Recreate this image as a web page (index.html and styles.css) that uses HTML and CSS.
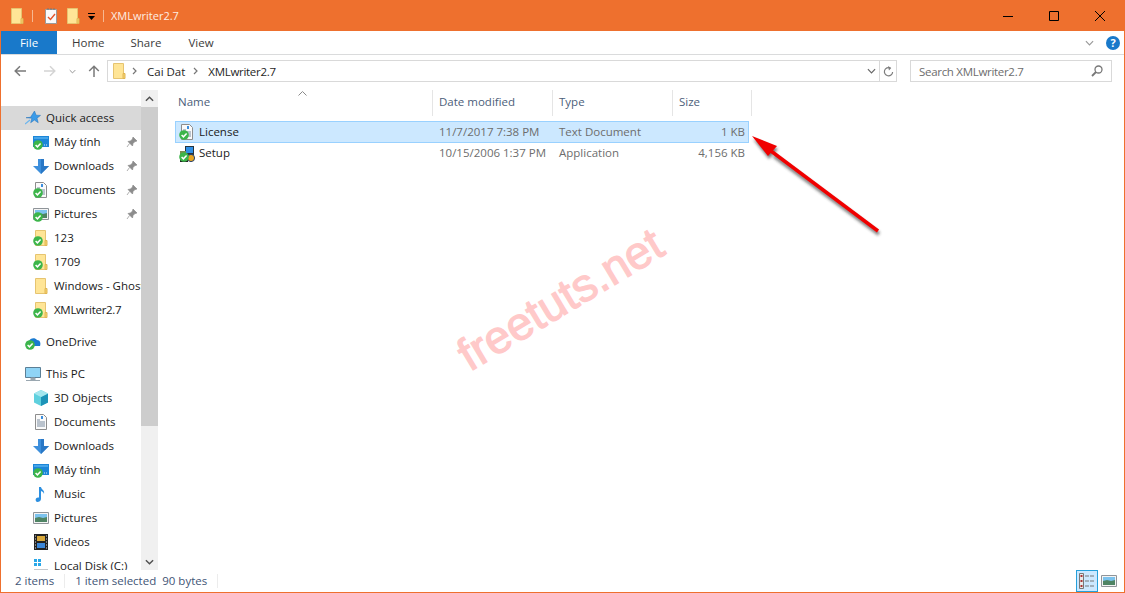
FILE: index.html
```html
<!DOCTYPE html>
<html lang="en">
<head>
<meta charset="utf-8">
<title>XMLwriter2.7</title>
<link rel="stylesheet" href="styles.css">
</head>
<body>
<svg class="defs" width="0" height="0" aria-hidden="true">
  <symbol id="i-folder" viewBox="0 0 16 16">
    <path d="M2.500 .5h10v15h-10z" fill="#ffe596" stroke="#e6c470"/>
    <path d="M12 10.500h2v5h-2z" fill="#f6d26f" stroke="#e0b654"/>
  </symbol>
  <symbol id="i-check" viewBox="0 0 16 16">
    <circle cx="5" cy="11" r="4.800" fill="#3cb54a"/>
    <path d="M2.600 11l1.800 1.800 3.200-3.400" fill="none" stroke="#fff" stroke-width="1.500"/>
  </symbol>
  <symbol id="i-star" viewBox="0 0 16 16">
    <path d="M9.500 1l1.600 4.200 4.400.2-3.500 2.800 1.200 4.500-3.800-2.600-3.700 2.600 1.200-4.500L1 7.700l4.500-.4z" fill="#3b9be8" stroke="#1f6fb8" stroke-width=".5"/>
    <path d="M0 14l5-4" stroke="#6bb5ee" stroke-width="1.200"/>
  </symbol>
  <symbol id="i-screen" viewBox="0 0 16 16">
    <path d="M0 2h16v11H0z" fill="#1c86d8"/>
    <path d="M1 3h14v2H1z" fill="#45a5ea"/>
    <path d="M11 11h1M13 11h1" stroke="#d6ecfa"/>
  </symbol>
  <symbol id="i-down" viewBox="0 0 16 16">
    <path d="M5 1h6v7h5l-8 8-8-8h5z" fill="#3d8fdc"/>
    <path d="M8 1h3v7h5l-8 8z" fill="#2a78c6"/>
  </symbol>
  <symbol id="i-doc" viewBox="0 0 16 16">
    <path d="M2.500 .5h8l3 3v12h-11z" fill="#fafafa" stroke="#8d8d8d"/>
    <path d="M4 6h3M4 8h8M4 10h8M4 12h8" stroke="#7a8ca0"/>
    <path d="M8 2h2v3H8z" fill="#3b8ede"/>
  </symbol>
  <symbol id="i-pic" viewBox="0 0 16 16">
    <path d="M.5 2.500h15v11H.5z" fill="#f4f4f4" stroke="#8f9499"/>
    <path d="M2 4h12v4H2z" fill="#7cc3ee"/>
    <path d="M2 8l4-1 4 1 4-1v5H2z" fill="#4f8464"/>
  </symbol>
  <symbol id="i-cloud" viewBox="0 0 16 16">
    <path d="M1 12c-1-3 1-5 3-5 1-3 6-4 8-1 3 0 4 3 3 6z" fill="#1a7ad0"/>
  </symbol>
  <symbol id="i-pc" viewBox="0 0 16 16">
    <path d="M.5 1.500h15v10H.5z" fill="#8fd4f6" stroke="#5b7f96"/>
    <path d="M6 12h4v2H6zM1 14.500h14" fill="#9aa7b0" stroke="#9aa7b0"/>
  </symbol>
  <symbol id="i-cube" viewBox="0 0 16 16">
    <path d="M8 0l7 3.500v9L8 16l-7-3.500v-9z" fill="#5fd0de"/>
    <path d="M8 7l7-3.500v9L8 16z" fill="#1c93b8"/>
    <path d="M8 7L1 3.500 8 0l7 3.500z" fill="#a4e6ee"/>
  </symbol>
  <symbol id="i-music" viewBox="0 0 16 16">
    <path d="M6 1h2c.5 3 4 3 3 7-.5-2-1.500-2.500-3-3v8c0 2-2 3-3.500 3S2 14 3 12.500c.7-1 2-1.300 3-1z" fill="#2c8fe0"/>
  </symbol>
  <symbol id="i-film" viewBox="0 0 16 16">
    <path d="M1 0h14v16H1z" fill="#222"/>
    <path d="M4 2h8v5H4z" fill="#d8a83a"/>
    <path d="M4 9h8v5H4z" fill="#3b86d8"/>
    <path d="M2 2h1M2 5h1M2 8h1M2 11h1M2 14h1M13 2h1M13 5h1M13 8h1M13 11h1M13 14h1" stroke="#ddd"/>
  </symbol>
  <symbol id="i-disk" viewBox="0 0 16 16">
    <path d="M1 1h3v3H1zM5 1h3v3H5zM1 5h3v3H1zM5 5h3v3H5z" fill="#28a7e8"/>
    <path d="M1 11h14v4H1z" fill="#c4c8cc"/>
  </symbol>
  <symbol id="i-pin" viewBox="0 0 12 12">
    <path d="M7 1l4 4-2 .5-2 2L6.500 10 2 5.500 4.500 5l2-2zM3.500 7.500L1 11" fill="#8c8c8c" stroke="#8c8c8c" stroke-width=".7"/>
  </symbol>
  <symbol id="i-setup" viewBox="0 0 16 16">
    <path d="M6 0h9v9H6z" fill="#26343f"/>
    <path d="M7 1h7v6H7z" fill="#2e8fe6"/>
    <path d="M1 5h6v6H1z" fill="#7d8c50"/>
    <circle cx="12" cy="12" r="3.600" fill="#e8a520" stroke="#24406e"/>
    <path d="M1 11h8v5H1z" fill="#222"/>
  </symbol>
  <symbol id="i-chevd" viewBox="0 0 10 6">
    <path d="M1 1l4 4 4-4" fill="none" stroke="currentColor" stroke-width="1.300"/>
  </symbol>
</svg>

<div class="window">
  <header class="titlebar">
    <svg class="qa"><use href="#i-folder"/></svg>
    <span class="qa-sep"></span>
    <svg class="qa qa-prop" viewBox="0 0 16 16"><path d="M2.500 1.500h11v14h-11z" fill="#fafafa" stroke="#9a9a9a"/><path d="M5 2V0M8 2V0M11 2V0" stroke="#777"/><path d="M5 9l2.500 2.500L12 6" fill="none" stroke="#e2552b" stroke-width="1.400"/></svg>
    <svg class="qa qa-new"><use href="#i-folder"/></svg>
    <svg class="qa-drop" viewBox="0 0 9 8"><path d="M1 .5h7" stroke="#000"/><path d="M1 3h7L4.500 7z" fill="#000"/></svg>
    <span class="qa-sep qa-sep2"></span>
    <span class="title">XMLwriter2.7</span>
    <div class="controls">
      <svg class="ctl" viewBox="0 0 12 12"><path d="M1 6.500h10" stroke="#000"/></svg>
      <svg class="ctl" viewBox="0 0 12 12"><path d="M1.500 1.500h9v9h-9z" fill="none" stroke="#000"/></svg>
      <svg class="ctl" viewBox="0 0 12 12"><path d="M1 1l10 10M11 1L1 11" stroke="#000"/></svg>
    </div>
  </header>

  <nav class="ribbon">
    <span class="tab tab-file">File</span>
    <span class="tab tab-home">Home</span>
    <span class="tab tab-share">Share</span>
    <span class="tab tab-view">View</span>
    <svg class="rib-chev"><use href="#i-chevd"/></svg>
    <span class="help">?</span>
  </nav>

  <div class="addressbar">
    <svg class="nav-btn nav-back" viewBox="0 0 12 12"><path d="M12 6H1.500M6 1.200L1.200 6 6 10.800" fill="none" stroke="#7a7a7a" stroke-width="1.500"/></svg>
    <svg class="nav-btn nav-fwd" viewBox="0 0 12 12"><path d="M0 6h10.500M6 1.200L10.800 6 6 10.800" fill="none" stroke="#d4d4d4" stroke-width="1.500"/></svg>
    <svg class="nav-recent"><use href="#i-chevd"/></svg>
    <svg class="nav-btn nav-up" viewBox="0 0 12 12"><path d="M6 12V1.500M1.200 6L6 1.200 10.800 6" fill="none" stroke="#7a7a7a" stroke-width="1.500"/></svg>
    <div class="path">
      <svg class="path-folder"><use href="#i-folder"/></svg>
      <svg class="crumb-arrow" viewBox="0 0 5 8"><path d="M1 1l3 3-3 3" fill="none" stroke="#777" stroke-width="1.200"/></svg>
      <span class="crumb">Cai Dat</span>
      <svg class="crumb-arrow" viewBox="0 0 5 8"><path d="M1 1l3 3-3 3" fill="none" stroke="#777" stroke-width="1.200"/></svg>
      <span class="crumb tight">XMLwriter2.7</span>
      <svg class="path-chev"><use href="#i-chevd"/></svg>
      <span class="path-refresh">
        <svg class="refresh" viewBox="0 0 12 12"><path d="M8 2.200A4.500 4.500 0 1 0 10.500 6.500" fill="none" stroke="#7d7d7d" stroke-width="1.300"/><path d="M5.500 0L9 2.300 6.500 5z" fill="#7d7d7d"/></svg>
      </span>
    </div>
    <div class="search">
      <span class="search-text tight">Search XMLwriter2.7</span>
      <svg class="search-ico" viewBox="0 0 12 12"><circle cx="7.500" cy="4.500" r="3.500" fill="none" stroke="#777" stroke-width="1.300"/><path d="M5 7l-4 4" stroke="#777" stroke-width="1.800"/></svg>
    </div>
  </div>

  <div class="main">
    <aside class="sidebar">
      <ul class="tree">
        <li class="node top active"><svg class="ico"><use href="#i-star"/></svg><span>Quick access</span></li>
        <li class="node"><svg class="ico"><use href="#i-screen"/><use href="#i-check"/></svg><span>Máy tính</span><svg class="pin"><use href="#i-pin"/></svg></li>
        <li class="node"><svg class="ico"><use href="#i-down"/></svg><span>Downloads</span><svg class="pin"><use href="#i-pin"/></svg></li>
        <li class="node"><svg class="ico"><use href="#i-doc"/><use href="#i-check"/></svg><span>Documents</span><svg class="pin"><use href="#i-pin"/></svg></li>
        <li class="node"><svg class="ico"><use href="#i-pic"/><use href="#i-check"/></svg><span>Pictures</span><svg class="pin"><use href="#i-pin"/></svg></li>
        <li class="node"><svg class="ico"><use href="#i-folder"/><use href="#i-check"/></svg><span>123</span></li>
        <li class="node"><svg class="ico"><use href="#i-folder"/><use href="#i-check"/></svg><span>1709</span></li>
        <li class="node"><svg class="ico"><use href="#i-folder"/></svg><span>Windows - Ghost</span></li>
        <li class="node"><svg class="ico"><use href="#i-folder"/><use href="#i-check"/></svg><span class="tight">XMLwriter2.7</span></li>
        <li class="node top gap"><svg class="ico"><use href="#i-cloud"/><use href="#i-check"/></svg><span>OneDrive</span></li>
        <li class="node top gap"><svg class="ico"><use href="#i-pc"/></svg><span>This PC</span></li>
        <li class="node"><svg class="ico"><use href="#i-cube"/></svg><span>3D Objects</span></li>
        <li class="node"><svg class="ico"><use href="#i-doc"/></svg><span>Documents</span></li>
        <li class="node"><svg class="ico"><use href="#i-down"/></svg><span>Downloads</span></li>
        <li class="node"><svg class="ico"><use href="#i-screen"/><use href="#i-check"/></svg><span>Máy tính</span></li>
        <li class="node"><svg class="ico"><use href="#i-music"/></svg><span>Music</span></li>
        <li class="node"><svg class="ico"><use href="#i-pic"/></svg><span>Pictures</span></li>
        <li class="node"><svg class="ico"><use href="#i-film"/></svg><span>Videos</span></li>
        <li class="node"><svg class="ico"><use href="#i-disk"/></svg><span>Local Disk (C:)</span></li>
      </ul>
      <div class="scrollbar">
        <svg class="sb-arrow" viewBox="0 0 10 6"><path d="M1 5l4-4 4 4" fill="none" stroke="#505050" stroke-width="1.600"/></svg>
        <div class="sb-thumb"></div>
        <div class="sb-track"></div>
        <svg class="sb-arrow" viewBox="0 0 10 6"><path d="M1 1l4 4 4-4" fill="none" stroke="#505050" stroke-width="1.600"/></svg>
      </div>
    </aside>

    <section class="files">
      <div class="columns">
        <span class="col col-name">Name</span>
        <span class="col">Date modified</span>
        <span class="col">Type</span>
        <span class="col">Size</span>
      </div>
      <svg class="sort" viewBox="0 0 9 5"><path d="M.5 4.500l4-4 4 4" fill="none" stroke="#8a8a8a"/></svg>
      <div class="row selected">
        <span class="cell-name"><svg class="ico"><use href="#i-doc"/><use href="#i-check"/></svg>License</span>
        <span class="cell">11/7/2017 7:38 PM</span>
        <span class="cell">Text Document</span>
        <span class="cell cell-size">1 KB</span>
      </div>
      <div class="row">
        <span class="cell-name"><svg class="ico"><use href="#i-setup"/><use href="#i-check"/></svg>Setup</span>
        <span class="cell">10/15/2006 1:37 PM</span>
        <span class="cell">Application</span>
        <span class="cell cell-size">4,156 KB</span>
      </div>
    </section>
  </div>

  <footer class="statusbar">
    <span class="st-count">2 items</span>
    <span class="st-sep"></span>
    <span class="st-sel">1 item selected</span>
    <span class="st-bytes">90 bytes</span>
    <span class="st-sep st-sep2"></span>
    <span class="view-btn view-on">
      <svg class="view-ico" viewBox="0 0 16 16"><path d="M.5 .5h4v15h-4z" fill="#e8e8e8" stroke="#777"/><path d="M1.500 3h2M1.500 8h2M1.500 13h2" stroke="#a33" stroke-width="2"/><path d="M6 3h4M11 3h4M6 8h4M11 8h4M6 13h4M11 13h4" stroke="#777"/></svg>
    </span>
    <span class="view-btn"><svg class="view-ico"><use href="#i-pic"/></svg></span>
  </footer>

  <span class="watermark">freetuts.net</span>
  <svg class="annot" viewBox="0 0 1125 593" aria-hidden="true">
    <defs><filter id="blur" x="-20%" y="-20%" width="140%" height="140%"><feGaussianBlur stdDeviation="1.800"/></filter></defs>
    <g filter="url(#blur)" opacity=".6" transform="translate(1 3)">
      <path d="M773 153L878 231" stroke="#222" stroke-width="3.500"/>
      <path d="M752 136l25 10-9 10z" fill="#222"/>
    </g>
    <path d="M771 151L878 231" stroke="#f00000" stroke-width="3.500"/>
    <path d="M752 136l25 10-9 10z" fill="#f00000"/>
  </svg>
</div>
</body>
</html>
```
FILE: styles.css
```css
* { box-sizing: border-box; }
html, body { margin: 0; padding: 0; height: 100%; overflow: hidden; }
body {
  font-family: "Open Sans", "Noto Sans", sans-serif;
  font-size: 11.5px;
  color: #1a1a1a;
  background: #fff;
}
.defs { position: absolute; }
svg { display: block; flex: none; }
ul { list-style: none; margin: 0; padding: 0; }
.tight { letter-spacing: -.3px; }

.window {
  position: relative;
  width: 1125px;
  height: 593px;
  display: flex;
  flex-direction: column;
  border: 1px solid #ee702e;
  border-top: 0;
  overflow: hidden;
}

/* Title bar */
.titlebar {
  height: 31px;
  margin: 0 -1px;
  background: #ee702e;
  display: flex;
  align-items: center;
  flex: none;
}
.qa { width: 16px; height: 16px; margin-left: 9px; }
.qa-sep { width: 1px; height: 12px; background: #f6b892; margin-left: 7px; }
.qa-prop { margin-left: 10px; }
.qa-new { margin-left: 6px; }
.qa-drop { width: 9px; height: 8px; margin-left: 6px; margin-top: 2px; }
.qa-sep2 { margin-left: 7px; }
.title { color: #fdeee4; margin-left: 7px; font-size: 11px; }
.controls { margin-left: auto; display: flex; gap: 34px; margin-right: 19px; }
.ctl { width: 12px; height: 12px; }

/* Ribbon */
.ribbon {
  height: 24px;
  flex: none;
  position: relative;
  display: flex;
  align-items: center;
  border-bottom: 1px solid #dadbdc;
}
.tab { color: #3b3b3b; }
.tab-file {
  width: 56px;
  height: 23px;
  background: #1979ca;
  color: #fff;
  display: flex;
  align-items: center;
  justify-content: center;
}
.tab-home { margin-left: 15px; }
.tab-share { margin-left: 26px; }
.tab-view { margin-left: 27px; }
.rib-chev { width: 9px; height: 6px; color: #9a9a9a; margin-left: auto; margin-right: 12px; }
.help {
  width: 14px;
  height: 14px;
  border-radius: 50%;
  background: #1979ca;
  color: #fff;
  font-weight: 700;
  font-size: 11px;
  line-height: 14px;
  text-align: center;
  margin-right: 4px;
}

/* Address bar */
.addressbar {
  height: 35px;
  flex: none;
  display: flex;
  align-items: center;
  padding-bottom: 3px;
}
.nav-btn { width: 12px; height: 12px; }
.nav-back { margin-left: 13px; }
.nav-fwd { margin-left: 18px; }
.nav-recent { width: 7px; height: 5px; margin-left: 13px; color: #8a8a8a; }
.nav-up { margin-left: 12px; }
.path {
  margin-left: 7px;
  width: 790px;
  height: 22px;
  border: 1px solid #d9d9d9;
  display: flex;
  align-items: center;
}
.path-folder { width: 16px; height: 16px; margin-left: 3px; }
.crumb-arrow { width: 5px; height: 8px; margin-left: 5px; }
.crumb { margin-left: 10px; color: #1f1f1f; }
.crumb + .crumb-arrow { margin-left: 8px; }
.path-chev { width: 9px; height: 6px; margin-left: auto; color: #666; margin-right: 3px; }
.path-refresh {
  width: 17px;
  height: 20px;
  border-left: 1px solid #d9d9d9;
  display: flex;
  align-items: center;
  justify-content: center;
}
.refresh { width: 11px; height: 11px; }
.search {
  margin-left: 13px;
  width: 202px;
  height: 22px;
  border: 1px solid #d9d9d9;
  display: flex;
  align-items: center;
  padding: 0 8px 0 8px;
  color: #6d6d6d;
}
.search-ico { width: 12px; height: 12px; margin-left: auto; }

/* Main */
.main { flex: 1; min-height: 0; display: flex; }
.sidebar { width: 157px; flex: none; display: flex; }
.tree { width: 140px; flex: none; padding-top: 16px; overflow: hidden; }
.node {
  height: 24px;
  display: flex;
  align-items: center;
  padding: 0 3px 0 32px;
  white-space: nowrap;
  overflow: hidden;
}
.node span { padding-bottom: 2px; }
.node .ico { margin-right: 5px; }
.node.top { padding-left: 24px; }
.node.gap { margin-top: 8px; }
.node.active { background: #d9d9d9; }
.ico { width: 16px; height: 16px; }
.pin { width: 12px; height: 12px; margin-left: auto; }
.scrollbar { width: 17px; flex: none; background: #f0f0f0; display: flex; flex-direction: column; align-items: center; }
.sb-arrow { width: 9px; height: 6px; margin: 6px 0 5px; }
.sb-thumb { width: 100%; height: 319px; background: #cdcdcd; }
.sb-track { flex: 1; }

/* File list */
.files { flex: 1; min-width: 0; position: relative; padding-left: 17px; }
.columns {
  display: grid;
  grid-template-columns: 258px 120px 120px 79px;
  height: 26px;
  margin-bottom: 5px;
}
.col {
  color: #4c607a;
  padding: 4px 0 0 6px;
  border-right: 1px solid #e5e5e5;
}
.col-name { padding-left: 3px; }
.sort { position: absolute; left: 140px; top: 1px; width: 9px; height: 5px; }
.row {
  display: grid;
  grid-template-columns: 258px 120px 120px 74px;
  width: 574px;
  height: 21px;
  align-items: center;
  border: 1px solid transparent;
  padding-bottom: 2px;
}
.row .ico { margin-bottom: -2px; }
.row.selected { height: 22px; background: #cce8ff; border-color: #99d1ff; }
.cell { color: #6d6d6d; padding-left: 5px; }
.cell-name { display: flex; align-items: center; gap: 4px; padding-left: 3px; color: #1a1a1a; }
.cell-size { text-align: right; padding-right: 3px; }

/* Status bar */
.statusbar { height: 22px; flex: none; display: flex; align-items: center; color: #3f5576; padding-left: 14px; }
.st-count, .st-sel, .st-bytes { padding-bottom: 2px; }
.st-sep { width: 1px; height: 14px; background: #ececec; margin-left: 10px; }
.st-sel { margin-left: 10px; }
.st-bytes { margin-left: 6px; }
.st-sep2 { margin-left: 10px; }
.view-btn { width: 22px; height: 22px; display: flex; align-items: center; justify-content: center; }
.view-on { margin-left: auto; background: #cce8ff; border: 1px solid #26a0da; }
.view-btn:last-child { margin-right: 4px; }
.view-ico { width: 16px; height: 16px; }

/* Overlays */
.watermark {
  position: absolute;
  left: 444px;
  top: 276px;
  font-family: "Liberation Sans", sans-serif;
  font-size: 46px;
  line-height: 1;
  color: #ffc9c9;
  -webkit-text-stroke: 1.2px #ffc9c9;
  transform: rotate(-31deg);
  transform-origin: center;
  white-space: nowrap;
}
.annot { position: absolute; left: -1px; top: 0; width: 1125px; height: 593px; pointer-events: none; }
```
